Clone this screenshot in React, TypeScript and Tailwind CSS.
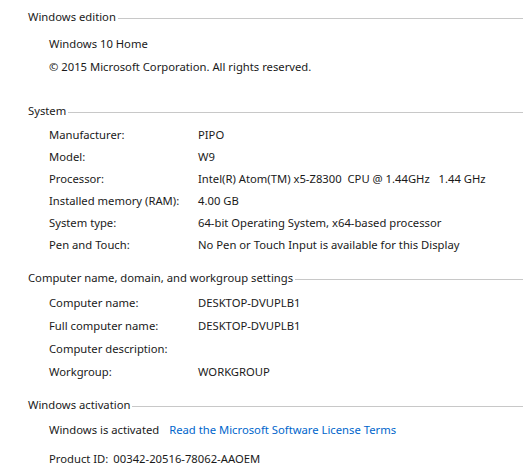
const font = { fontFamily: '"Noto Sans", "Segoe UI", sans-serif' };

type Row = [string, string];

const Heading = ({ title, className = "" }: { title: string; className?: string }) => (
  <div className={`flex items-center h-[22px] pl-[28px] ${className}`}>
    <span className="whitespace-nowrap">{title}</span>
    <div className="flex-1 h-px bg-[#c8c8c8] ml-[2px] mt-[3px]" />
  </div>
);

const Rows = ({ rows, rowClass, className = "" }: { rows: Row[]; rowClass: string; className?: string }) => (
  <div className={className}>
    {rows.map(([label, value]) => (
      <div key={label} className={`flex items-center pl-[49px] ${rowClass}`}>
        <span className="w-[149px] shrink-0">{label}</span>
        <span className="whitespace-pre">{value}</span>
      </div>
    ))}
  </div>
);

const system: Row[] = [
  ["Manufacturer:", "PIPO"],
  ["Model:", "W9"],
  ["Processor:", "Intel(R) Atom(TM) x5-Z8300  CPU @ 1.44GHz   1.44 GHz"],
  ["Installed memory (RAM):", "4.00 GB"],
  ["System type:", "64-bit Operating System, x64-based processor"],
  ["Pen and Touch:", "No Pen or Touch Input is available for this Display"],
];

const computer: Row[] = [
  ["Computer name:", "DESKTOP-DVUPLB1"],
  ["Full computer name:", "DESKTOP-DVUPLB1"],
  ["Computer description:", ""],
  ["Workgroup:", "WORKGROUP"],
];

export default function App() {
  return (
    <div
      className="w-[523px] h-[475px] bg-white text-[#1a1a1a] text-[11.25px] leading-none overflow-hidden pt-[6px]"
      style={font}
    >
      <Heading title="Windows edition" />
      <div className="mt-[4px] pl-[49px]">
        <div className="h-[23px] flex items-center">Windows 10 Home</div>
        <div className="h-[23px] flex items-center">© 2015 Microsoft Corporation. All rights reserved.</div>
      </div>

      <Heading title="System" className="mt-[22px]" />
      <Rows rows={system} rowClass="h-[22px]" className="mt-[2px]" />

      <Heading title="Computer name, domain, and workgroup settings" className="mt-[11px]" />
      <Rows rows={computer} rowClass="h-[23px]" className="mt-[2px]" />

      <Heading title="Windows activation" className="mt-[11px]" />
      <div className="pl-[49px]">
        <div className="h-[22px] mt-[3px] flex items-center">
          <span>Windows is activated</span>
          <a href="#" className="ml-[10px] text-[#0066cc]">
            Read the Microsoft Software License Terms
          </a>
        </div>
        <div className="h-[22px] mt-[7px] flex items-center">
          <span>Product ID:</span>
          <span className="ml-[5px]">00342-20516-78062-AAOEM</span>
        </div>
      </div>
    </div>
  );
}
